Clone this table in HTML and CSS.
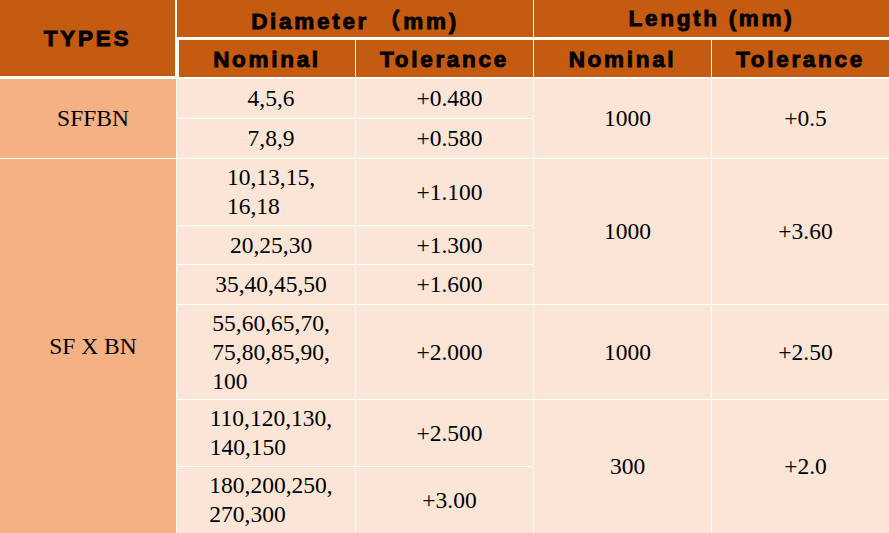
FILE: index.html
```html
<!DOCTYPE html>
<html>
<head>
<meta charset="utf-8">
<link rel="stylesheet" href="styles.css">
</head>
<body>
<table class="spec">
  <colgroup>
    <col class="c1"><col class="c2"><col class="c3"><col class="c4"><col class="c5">
  </colgroup>
  <thead>
    <tr class="h1">
      <th class="types" rowspan="2">TYPES</th>
      <th class="group" colspan="2">Diameter （mm)</th>
      <th class="group last" colspan="2">Length (mm)</th>
    </tr>
    <tr class="h2">
      <th class="first">Nominal</th>
      <th>Tolerance</th>
      <th>Nominal</th>
      <th class="last">Tolerance</th>
    </tr>
  </thead>
  <tbody>
    <tr class="r40">
      <td class="type" rowspan="2">SFFBN</td>
      <td><span class="blk">4,5,6</span></td>
      <td>+0.480</td>
      <td rowspan="2">1000</td>
      <td class="last" rowspan="2">+0.5</td>
    </tr>
    <tr class="r40">
      <td><span class="blk">7,8,9</span></td>
      <td>+0.580</td>
    </tr>
    <tr class="r67">
      <td class="type bottom" rowspan="8">SF X BN</td>
      <td><span class="blk">10,13,15,<br>16,18</span></td>
      <td>+1.100</td>
      <td rowspan="3">1000</td>
      <td class="last" rowspan="3">+3.60</td>
    </tr>
    <tr class="r39">
      <td><span class="blk">20,25,30</span></td>
      <td>+1.300</td>
    </tr>
    <tr class="r40">
      <td><span class="blk">35,40,45,50</span></td>
      <td>+1.600</td>
    </tr>
    <tr class="r95">
      <td><span class="blk">55,60,65,70,<br>75,80,85,90,<br>100</span></td>
      <td>+2.000</td>
      <td>1000</td>
      <td class="last">+2.50</td>
    </tr>
    <tr class="r67">
      <td><span class="blk">110,120,130,<br>140,150</span></td>
      <td>+2.500</td>
      <td class="bottom" rowspan="2">300</td>
      <td class="last bottom" rowspan="2">+2.0</td>
    </tr>
    <tr class="r66">
      <td class="bottom"><span class="blk">180,200,250,<br>270,300</span></td>
      <td class="bottom">+3.00</td>
    </tr>
  </tbody>
</table>
</body>
</html>
```

FILE: styles.css
```css
html, body {
  margin: 0;
  padding: 0;
  background: #fbe5d6;
}

.spec {
  width: 889px;
  table-layout: fixed;
  border-collapse: separate;
  border-spacing: 0;
}

.c1 { width: 177px; }
.c2 { width: 179px; }
.c3 { width: 178px; }
.c4 { width: 178px; }
.c5 { width: 177px; }

.spec th,
.spec td {
  padding: 0;
  border-right: 1px solid #fff;
  border-bottom: 1px solid #fff;
  text-align: center;
  vertical-align: middle;
}

.spec th {
  background: #c55a11;
  color: #000;
  font-family: "Liberation Sans", "Noto Sans CJK SC", Arial, sans-serif;
  font-weight: bold;
  font-size: 22.5px;
  letter-spacing: 2.7px;
  -webkit-text-stroke: 0.9px #000;
}

.spec .last { border-right: none; }

.h1 { height: 40px; }
.h2 { height: 39px; }

.spec th.types {
  border-right: 2px solid #fff;
  border-bottom: 3px solid #fff;
  padding-top: 2px;
}

.spec th.group {
  border-bottom: 3px solid #fff;
  padding-top: 1px;
}

.spec .h2 th {
  border-bottom: 2px solid #fff;
  padding-top: 2px;
}

.spec .h2 th.first {
  border-left: 2px solid #fff;
}

.spec td {
  background: #fbe5d6;
  color: #000;
  font-family: "Liberation Serif", "Times New Roman", serif;
  font-size: 23.5px;
  line-height: 29px;
  padding-left: 10px;
}

.spec td.type {
  background: #f4b183;
}

.spec td.bottom { border-bottom: none; }

.blk {
  display: inline-block;
  text-align: left;
}

.r39 { height: 39px; }
.r40 { height: 40px; }
.r66 { height: 66px; }
.r67 { height: 67px; }
.r95 { height: 95px; }
```
